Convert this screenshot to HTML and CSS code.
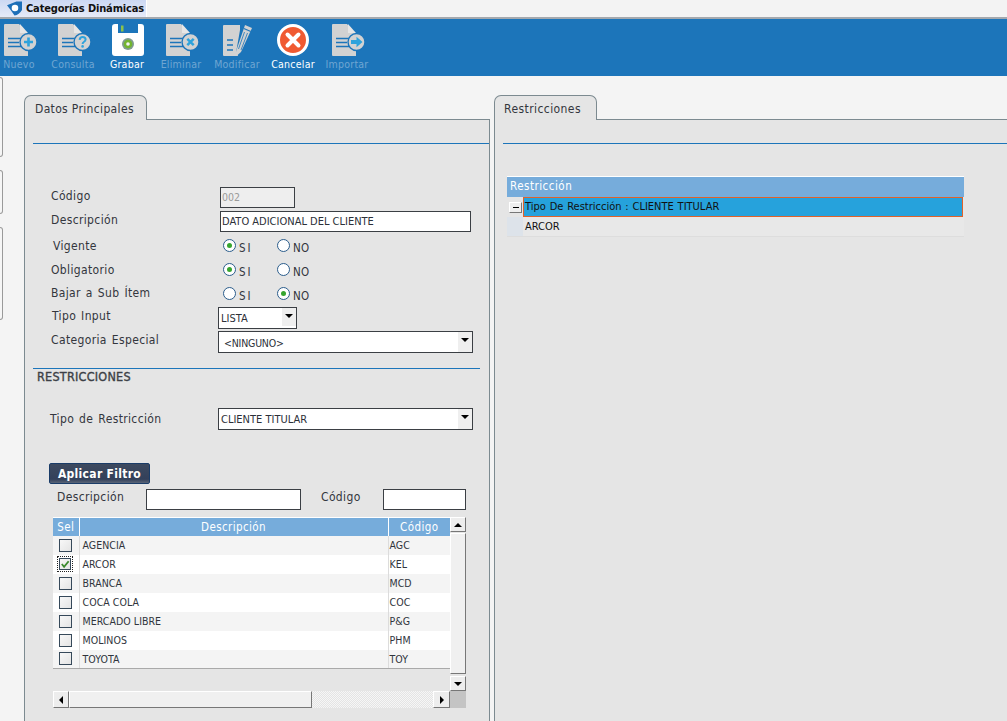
FILE: index.html
```html
<!DOCTYPE html>
<html lang="es">
<head>
<meta charset="utf-8">
<title>Categorías Dinámicas</title>
<link rel="stylesheet" href="styles.css">
</head>
<body>
<svg class="defs" width="0" height="0" aria-hidden="true">
  <defs>
    <g id="doc">
      <path d="M1 0H15L24 10V32H1Q0 32 0 31V1Q0 0 1 0Z" fill="#d2d2d2"/>
      <path d="M16 0L24 9H16Z" fill="#e6e6e6"/>
      <path d="M4 14.5H17M4 18.5H15M4 22.5H17" stroke="#1c75ba" stroke-width="1.6" fill="none"/>
    </g>
  </defs>
</svg>
<header class="tabbar">
  <div class="apptab">
    <svg class="applogo" viewBox="0 0 16 15"><path d="M0 4L10 0H16V9Q13 14 8 15Q4 9 0 4Z" fill="#1d6fb8"/><circle cx="8.500" cy="7" r="3.500" fill="#fff"/></svg>
    <span>Categorías Dinámicas</span>
  </div>
</header>
<nav class="toolbar">
  <div class="tool off">
    <svg class="ico doc" viewBox="0 0 33 33"><use href="#doc"/><circle cx="24.5" cy="18" r="8.5" fill="#d2d2d2" stroke="#1c75ba" stroke-width="1.4"/><path d="M24.5 13.5V22.5M20 18H29" stroke="#2ea3dc" stroke-width="2.6"/></svg>
    <span>Nuevo</span>
  </div>
  <div class="tool off">
    <svg class="ico doc" viewBox="0 0 33 33"><use href="#doc"/><circle cx="24.5" cy="18" r="8.5" fill="#d2d2d2" stroke="#1c75ba" stroke-width="1.4"/><path d="M21.6 15.8Q22 13 24.6 13Q27.6 13 27.6 15.6Q27.6 17 25.8 18Q24.6 18.7 24.6 20" stroke="#2ea3dc" stroke-width="2" fill="none"/><circle cx="24.6" cy="22.4" r="1.3" fill="#2ea3dc"/></svg>
    <span>Consulta</span>
  </div>
  <div class="tool on">
    <svg class="ico nudge" viewBox="0 0 32 32"><path d="M3 0H6V9H26V0H29Q32 0 32 3V29Q32 32 29 32H3Q0 32 0 29V3Q0 0 3 0Z" fill="#fff"/><rect x="9" y="1.5" width="2.5" height="6" fill="#8bc34a"/><circle cx="16" cy="20" r="6" fill="#7f9c8f"/><circle cx="16" cy="20" r="4.3" fill="#72b52e"/><circle cx="16" cy="20" r="1.8" fill="#f2f2f2"/></svg>
    <span>Grabar</span>
  </div>
  <div class="tool off">
    <svg class="ico doc" viewBox="0 0 33 33"><use href="#doc"/><circle cx="24.5" cy="18" r="8.5" fill="#d2d2d2" stroke="#1c75ba" stroke-width="1.4"/><path d="M21.3 14.8L27.7 21.2M27.7 14.8L21.3 21.2" stroke="#2ea3dc" stroke-width="2.5"/></svg>
    <span>Eliminar</span>
  </div>
  <div class="tool off wide">
    <svg class="ico" viewBox="0 0 32 32"><path d="M3 1H19V6L15.500 26L17 32H3Q2 32 2 31V2Q2 1 3 1Z" fill="#d2d2d2"/><path d="M6 16H12M6 21H12M6 26H12" stroke="#1c75ba" stroke-width="1.6"/><path d="M24 1L31 4L20 28L15.500 32L15.500 26Z" fill="#d2d2d2"/><path d="M22.800 4.500L29.800 7.500" stroke="#1c75ba" stroke-width="1.100"/><path d="M23.500 8L17.500 25M26.500 9L20 26" stroke="#1c75ba" stroke-width=".8"/></svg>
    <span>Modificar</span>
  </div>
  <div class="tool on">
    <svg class="ico" viewBox="0 0 32 32"><circle cx="16" cy="16" r="14.500" fill="#f05a32" stroke="#fff" stroke-width="3"/><path d="M10.500 10.500L21.500 21.500M21.500 10.500L10.500 21.500" stroke="#fff" stroke-width="4" stroke-linecap="round"/></svg>
    <span>Cancelar</span>
  </div>
  <div class="tool off">
    <svg class="ico doc" viewBox="0 0 33 33"><use href="#doc"/><circle cx="24.5" cy="18" r="8.5" fill="#d2d2d2" stroke="#1c75ba" stroke-width="1.4"/><path d="M19 16H24.500V12.800L30.500 18L24.500 23.200V20H19Z" fill="#2ea3dc"/></svg>
    <span>Importar</span>
  </div>
</nav>
<main class="work">
  <div class="rail">
    <div class="stub s1"></div>
    <div class="stub s2"></div>
    <div class="stub s3"></div>
  </div>
  <section class="panel left">
    <div class="tabrow">
      <div class="tab t1">Datos Principales</div>
      <div class="tabfill"></div>
    </div>
    <div class="pane">
      <div class="rule"></div>
      <form class="form">
        <div class="row r-code"><label class="lbl">Código</label><div class="inp dis w75">002</div></div>
        <div class="row r-desc"><label class="lbl">Descripción</label><div class="inp w251">DATO ADICIONAL DEL CLIENTE</div></div>
        <div class="row r-radio first"><label class="lbl ind">Vigente</label>
          <div class="radios"><span class="rad sel"></span><span class="rtxt si">SI</span><span class="rad"></span><span class="rtxt">NO</span></div></div>
        <div class="row r-radio"><label class="lbl">Obligatorio</label>
          <div class="radios"><span class="rad sel"></span><span class="rtxt si">SI</span><span class="rad"></span><span class="rtxt">NO</span></div></div>
        <div class="row r-radio"><label class="lbl">Bajar a Sub Ítem</label>
          <div class="radios"><span class="rad"></span><span class="rtxt si">SI</span><span class="rad sel"></span><span class="rtxt">NO</span></div></div>
        <div class="row r-sel first-sel"><label class="lbl ind1">Tipo Input</label><div class="sel-box w79"><span>LISTA</span><i class="drop"></i></div></div>
        <div class="row r-sel"><label class="lbl">Categoria Especial</label><div class="sel-box w255"><span class="pad">&lt;NINGUNO&gt;</span><i class="drop tall"></i></div></div>
        <div class="rule2"></div>
        <h3 class="sect">RESTRICCIONES</h3>
        <div class="row r-sel tipo"><label class="lbl lb2">Tipo de Restricción</label><div class="sel-box w255"><span>CLIENTE TITULAR</span><i class="drop tall"></i></div></div>
        <button type="button" class="apply">Aplicar Filtro</button>
        <div class="filter">
          <label class="flbl">Descripción</label><div class="inp w155"></div>
          <label class="flbl code">Código</label><div class="inp w83"></div>
        </div>
        <div class="gridwrap">
          <div class="tblarea">
            <table class="tbl">
              <colgroup><col class="c1"><col class="c2"><col class="c3"></colgroup>
              <thead><tr><th>Sel</th><th>Descripción</th><th>Código</th></tr></thead>
              <tbody>
                <tr><td class="cc"><span class="chk"></span></td><td>AGENCIA</td><td>AGC</td></tr>
                <tr><td class="cc"><span class="focus"><span class="chk on"><svg viewBox="0 0 11 11"><path d="M2 5.500L4.500 8.500L9.500 2.500" fill="none" stroke="#3b8a2e" stroke-width="2"/></svg></span></span></td><td>ARCOR</td><td>KEL</td></tr>
                <tr><td class="cc"><span class="chk"></span></td><td>BRANCA</td><td>MCD</td></tr>
                <tr><td class="cc"><span class="chk"></span></td><td>COCA COLA</td><td>COC</td></tr>
                <tr><td class="cc"><span class="chk"></span></td><td>MERCADO LIBRE</td><td>P&amp;G</td></tr>
                <tr><td class="cc"><span class="chk"></span></td><td>MOLINOS</td><td>PHM</td></tr>
                <tr><td class="cc"><span class="chk"></span></td><td>TOYOTA</td><td>TOY</td></tr>
              </tbody>
            </table>
          </div>
          <div class="vbar">
            <div class="sbtn v"><i class="arr up"></i></div>
            <div class="vthumb"></div>
            <div class="sbtn v"><i class="arr down"></i></div>
          </div>
          <div class="hbar">
            <div class="sbtn h first"><i class="arr lt"></i></div>
            <div class="hthumb"></div>
            <div class="htrack"></div>
            <div class="sbtn h"><i class="arr rt"></i></div>
          </div>
          <div class="corner"></div>
        </div>
      </form>
    </div>
  </section>
  <section class="panel right">
    <div class="tabrow">
      <div class="tab t2">Restricciones</div>
      <div class="tabfill"></div>
    </div>
    <div class="pane">
      <div class="rule rr"></div>
      <div class="tree">
        <div class="thead">Restricción</div>
        <div class="trow"><div class="gut"><span class="exp"></span></div><div class="tcell active">Tipo De Restricción : CLIENTE TITULAR</div></div>
        <div class="trow plain"><div class="gut light"></div><div class="tcell">ARCOR</div></div>
      </div>
    </div>
  </section>
</main>
</body>
</html>
```

FILE: styles.css
```css
* { box-sizing: border-box; }
html, body { margin: 0; height: 721px; overflow: hidden; }
body {
  background: #f4f4f4;
  font-family: "DejaVu Sans Condensed", "DejaVu Sans", sans-serif;
  font-size: 12px;
  color: #33363d;
}
.defs { display: block; height: 0; }

/* title strip */
.tabbar { height: 19px; background: #f3f3f3; border-bottom: 2px solid #a3a8ae; }
.apptab {
  width: 147px; height: 17px; display: flex; align-items: center; gap: 4px; padding-left: 7px;
  background: linear-gradient(#ccd8f3, #e6ebf8);
  border-right: 1px solid #fff;
  font-weight: 700; font-size: 11px; letter-spacing: -.15px; color: #111; white-space: nowrap;
}
.applogo { width: 15px; height: 15px; flex: none; }

/* toolbar */
.toolbar { height: 57px; background: #1c75ba; display: flex; margin-left: -8px; padding-top: 5px; width: 1015px; }
.tool { width: 54px; display: flex; flex-direction: column; align-items: center; font-size: 10.5px; letter-spacing: .25px; white-space: nowrap; }
.tool.wide { width: 58px; }
.tool .ico { width: 32px; height: 32px; display: block; margin-bottom: 2px; overflow: visible; flex: none; }
.tool .ico.doc { width: 33px; height: 33px; margin-bottom: 1px; margin-left: 3px; }
.tool .ico.nudge { margin-left: 2px; }
.tool.off span { color: #6fa6d2; }
.tool.on span { color: #fff; }

/* work area */
.work { display: flex; height: 645px; }
.rail { width: 24px; flex: none; padding-top: 1px; }
.stub { width: 3px; background: #f6f6f6; border: 1px solid #9a9a9a; border-left: 0; border-radius: 0 3px 3px 0; }
.s1 { height: 80px; }
.s2 { height: 44px; margin-top: 13px; }
.s3 { height: 93px; margin-top: 13px; }

.panel { display: flex; flex-direction: column; margin-top: 19px; }
.left { width: 466px; }
.right { flex: 1; margin-left: 4px; }
.tabrow { display: flex; height: 25px; flex: none; }
.tab {
  height: 25px; background: #e5e5e5; border: 1px solid #7c8a90; border-bottom: 0;
  border-radius: 7px 7px 0 0; padding: 6px 0 0 10px; letter-spacing: .34px;
}
.t1 { width: 123px; }
.t2 { width: 103px; padding-left: 9px; letter-spacing: .42px; }
.tabfill { flex: 1; border-bottom: 1px solid #7c8a90; }
.pane { flex: 1; background: #e5e5e5; border-left: 1px solid #7c8a90; border-right: 1px solid #7c8a90; }
.right .pane { border-right: 0; }

.rule { height: 1px; background: #1c75ba; margin: 23px 0 0 8px; }
.rr { margin-left: 8px; }

/* form */
.form { display: flex; flex-direction: column; padding-top: 43px; }
.row { display: flex; align-items: center; padding-left: 26px; }
.lbl { width: 167px; flex: none; letter-spacing: .36px; word-spacing: 1.2px; }
.ind { padding-left: 2px; }
.ind1 { padding-left: 1px; }
.r-code, .r-desc { height: 21px; }
.r-desc { margin-top: 3px; }
.r-code .lbl, .r-desc .lbl { margin-top: -3px; }
.r-radio { height: 24px; }
.r-radio.first { margin-top: 1px; }
.r-radio .lbl { margin-top: 2px; }
.r-radio:nth-of-type(5) .lbl { margin-top: 0; }
.r-sel { height: 22px; margin-top: 2px; }
.r-sel.first-sel { margin-top: 2px; }
.r-sel .lbl { margin-top: -4px; }
.inp {
  height: 21px; margin-left: 2px; background: #fff; border: 1px solid #3b3f44;
  font-size: 11px; line-height: 19px; padding-left: 1px; color: #2c3038;
}
.dis { background: #eee; color: #9a9a9a; font-size: 10.5px; }
.w75 { width: 75px; }
.w251 { width: 251px; }
.w155 { width: 155px; margin-left: 0; }
.w83 { width: 83px; margin-left: 0; }

.radios { display: flex; align-items: center; padding-left: 5px; }
.rad {
  width: 13px; height: 13px; flex: none; border-radius: 50%; background: #fff; border: 1px solid #2b5d8c;
  display: flex; align-items: center; justify-content: center;
}
.rad.sel::after { content: ""; width: 5px; height: 5px; border-radius: 50%; background: #36a52f; }
.rtxt { font-size: 11.5px; margin: 5px 0 0 3px; letter-spacing: .2px; }
.rtxt.si { width: 38px; letter-spacing: 2px; }

.sel-box {
  height: 22px; background: #fff; border: 1px solid #3b3f44; display: flex; justify-content: space-between;
  font-size: 11px; padding-left: 2px; line-height: 21px; color: #2c3038;
}
.w79 { width: 79px; }
.w255 { width: 255px; }
.pad { padding-left: 3px; line-height: 22px; font-size: 10.5px; letter-spacing: -.2px; }
.drop { width: 14px; height: 18px; background: #efefef; position: relative; flex: none; }
.drop.tall { height: 20px; }
.drop::after {
  content: ""; position: absolute; left: 3px; top: 6px; border: 4px solid transparent; border-top: 4px solid #000; border-bottom: 0;
}
.rule2 { height: 1px; background: #1c75ba; margin: 15px 9px 0 8px; }
.sect {
  margin: 0 0 1px 12px; font-size: 12.5px; line-height: 16px; font-weight: 400; color: #3c3f46;
  letter-spacing: .25px; -webkit-text-stroke: .35px #3c3f46;
}
.tipo { margin-top: 22px; padding-left: 25px; }
.lb2 { width: 168px; margin-top: 0 !important; }
.apply {
  align-self: flex-start; margin: 33px 0 0 24px; width: 101px; height: 21px; padding: 1px 0 0;
  background: linear-gradient(#3d4a60, #33405a 80%, #5a6578); border: 1px solid #1a3c68; border-radius: 2px;
  color: #fff; font: 700 12px "DejaVu Sans Condensed", "DejaVu Sans", sans-serif; letter-spacing: .3px;
}
.filter { display: flex; align-items: center; height: 22px; margin-top: 4px; padding-left: 32px; }
.flbl { width: 89px; letter-spacing: .36px; margin-top: -4px; }
.flbl.code { width: 62px; margin-left: 20px; }

/* grid */
.gridwrap {
  margin: 7px 0 0 28px; width: 413px; display: grid;
  grid-template-columns: 397px 16px; grid-template-rows: 174px 17px;
}
.tbl { width: 397px; table-layout: fixed; border-collapse: collapse; font-size: 10.5px; }
.c1 { width: 26px; }
.c3 { width: 62px; }
.tbl th {
  height: 18px; padding: 0; background: #76acdb; color: #fff; font-weight: 400; font-size: 11.5px; letter-spacing: .4px;
  border-left: 1px solid #fff; border-top: 1px solid #fff;
}
.tbl th:first-child { border-left: 0; }
.tbl td { height: 19px; padding: 0 0 0 1px; border-left: 1px solid #dcdcdc; background: #fff; color: #30343c; letter-spacing: .05px; }
.tbl td:nth-child(2) { padding-left: 3px; }
.tbl td:first-child { border-left: 0; }
.tbl tbody tr:nth-child(odd) td { background: #f4f4f4; }
.tbl tbody tr:last-child td { border-bottom: 1px solid #a9a9a9; }
.tbl .cc { padding: 0; }
.chk {
  display: block; width: 13px; height: 13px; margin: 0 0 0 6px; border: 1px solid #36495a;
  background: linear-gradient(135deg, #f8f8f8, #e4e4e4);
}
.focus { display: block; width: 16px; height: 16px; margin-left: 4px; border: 1px dotted #222; padding: 1px; }
.focus .chk { margin: 0; width: 12px; height: 12px; }
.chk svg { display: block; width: 10px; height: 10px; }
.vbar { display: flex; flex-direction: column; }
.sbtn { background: #ededed; border: 1px solid #fff; border-right-color: #777; border-bottom-color: #777; display: flex; align-items: center; justify-content: center; flex: none; }
.sbtn.v { width: 16px; height: 15px; }
.sbtn.h { width: 17px; height: 17px; }
.sbtn.h.first { width: 16px; }
.vthumb { width: 16px; height: 141px; margin: 1px 0 2px; background: #f0f0f0; border: 1px solid #fff; border-right-color: #777; border-bottom-color: #777; }
.arr { display: block; width: 0; height: 0; border: 4px solid transparent; }
.up { border-bottom-color: #000; border-top: 0; }
.down { border-top-color: #000; border-bottom: 0; }
.lt { border-right-color: #000; border-left: 0; }
.rt { border-left-color: #000; border-right: 0; }
.hbar { display: flex; }
.hthumb { width: 243px; background: #f0f0f0; border: 1px solid #fff; border-right-color: #777; border-bottom-color: #777; }
.htrack { flex: 1; background: repeating-conic-gradient(#f6f6f6 0 25%, #e4e4e4 0 50%) 0 0 / 2px 2px; }
.corner { background: #c4c4c4; }

/* tree */
.tree { width: 457px; margin: 32px 0 0 12px; font-size: 11px; color: #111; }
.thead { height: 21px; background: #76acdb; border-top: 1px solid #fff; color: #fff; font-size: 11.5px; line-height: 19px; padding-left: 3px; letter-spacing: .5px; }
.trow { display: flex; height: 20px; }
.gut { width: 16px; flex: none; display: flex; align-items: center; padding-left: 2px; }
.gut.light { background: #dde3ea; }
.exp { width: 13px; height: 11px; background: #eee; border: 1px solid #fff; border-right-color: #777; border-bottom-color: #777; position: relative; }
.exp::after { content: ""; position: absolute; left: 3px; top: 4px; width: 6px; height: 1px; background: #000; }
.tcell { flex: 1; margin-right: 1px; line-height: 18px; padding-left: 1px; border: 1px solid transparent; word-spacing: .7px; }
.tcell.active { background: #26a2dc; border-color: #e0622a; }
.plain { border-bottom: 1px solid #ddd; }
.plain .tcell { background: #e8e8e8; border: 0; padding-left: 2px; margin: 0; line-height: 20px; }
```
